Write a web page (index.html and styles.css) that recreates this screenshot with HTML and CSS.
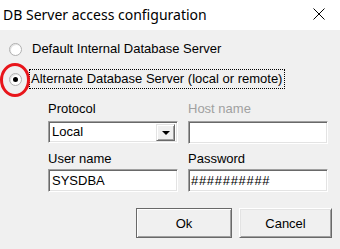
FILE: index.html
```html
<!DOCTYPE html>
<html>
<head>
<meta charset="utf-8">
<link rel="stylesheet" href="styles.css">
</head>
<body>
<div class="window">
  <div class="titlebar">
    <span class="title">DB Server access configuration</span>
    <svg class="close" width="12" height="12" viewBox="0 0 12 12"><path d="M0.5 0.5 L11.5 11.5 M11.5 0.5 L0.5 11.5" stroke="#000" stroke-width="1" fill="none"/></svg>
  </div>
  <div class="content">
    <div class="radio-row row1">
      <span class="radio"></span>
      <span class="radio-label">Default Internal Database Server</span>
    </div>
    <div class="radio-row row2">
      <span class="radio checked"><span class="dot"></span><span class="ring"></span></span>
      <span class="radio-label focus">Alternate Database Server (local or remote)</span>
    </div>
    <div class="fields">
      <div class="field-row first">
        <div class="cell left">
          <div class="label">Protocol</div>
          <div class="select sunken">
            <span class="value">Local</span>
            <span class="drop"><span class="tri"></span></span>
          </div>
        </div>
        <div class="cell right">
          <div class="label disabled">Host name</div>
          <div class="input sunken"></div>
        </div>
      </div>
      <div class="field-row second">
        <div class="cell left">
          <div class="label">User name</div>
          <div class="input sunken"><span class="value">SYSDBA</span></div>
        </div>
        <div class="cell right">
          <div class="label">Password</div>
          <div class="input sunken"><span class="value pw">##########</span></div>
        </div>
      </div>
    </div>
    <div class="buttons">
      <div class="btn default"><span>Ok</span></div>
      <div class="btn"><span>Cancel</span></div>
    </div>
  </div>
</div>
</body>
</html>
```
FILE: styles.css
```css
html, body {
  margin: 0;
  padding: 0;
  width: 340px;
  height: 249px;
  overflow: hidden;
}
.window {
  width: 340px;
  height: 249px;
  display: flex;
  flex-direction: column;
  font-family: "Liberation Sans", Arial, sans-serif;
  font-size: 13px;
  color: #000;
}
.titlebar {
  height: 30px;
  background: #fff;
  display: flex;
  align-items: center;
  padding-left: 3px;
  position: relative;
}
.title {
  font-family: "Noto Sans", "Open Sans", sans-serif;
  font-size: 14px;
  color: #000;
  margin-top: -1px;
}
.close {
  position: absolute;
  left: 313px;
  top: 8px;
}
.content {
  flex: 1;
  background: #f0f0f0;
  padding-top: 9px;
  display: flex;
  flex-direction: column;
}
.radio-row {
  height: 20px;
  display: flex;
  align-items: center;
  padding-left: 9px;
}
.row2 {
  margin-top: 10px;
}
.radio {
  width: 13px;
  height: 13px;
  box-sizing: border-box;
  border-radius: 50%;
  background: #fff;
  border: 1px solid #b0b0b0;
  box-shadow: inset 1px 1px 0 #e3e3e3;
  position: relative;
  flex: none;
}
.radio .dot {
  position: absolute;
  left: 3px;
  top: 3px;
  width: 5px;
  height: 5px;
  border-radius: 50%;
  background: #000;
}
.radio .ring {
  position: absolute;
  left: -10px;
  top: -11px;
  width: 24px;
  height: 28px;
  border: 3px solid #e8151b;
  border-radius: 50%;
}
.radio-label {
  margin-left: 9px;
  line-height: 16px;
  padding: 0 1px;
}
.radio-label.focus {
  margin-left: 7px;
  border: 1px dotted #000;
  padding: 1px 2px 1px 1px;
}
.fields {
  padding-left: 48px;
  margin-top: 12px;
  display: flex;
  flex-direction: column;
}
.field-row {
  display: flex;
  gap: 10px;
}
.second {
  margin-top: 7px;
}
.cell.left {
  width: 130px;
}
.cell.right {
  width: 140px;
}
.label {
  line-height: 16px;
  height: 16px;
}
.first .label {
  margin-bottom: 4px;
}
.second .label {
  margin-bottom: 2px;
}
.label.disabled {
  color: #a0a0a0;
}
.sunken {
  height: 23px;
  box-sizing: border-box;
  background: #fff;
  border: 1px solid;
  border-color: #a0a0a0 #fff #fff #a0a0a0;
  box-shadow: inset 1px 1px 0 #696969, inset -1px -1px 0 #e3e3e3;
  display: flex;
  align-items: center;
  padding-left: 3px;
}
.select {
  height: 22px;
  margin-top: 1px;
  padding-right: 2px;
}
.value {
  flex: 1;
  line-height: 16px;
}
.value.pw {
  letter-spacing: 0.7px;
  margin-left: -1px;
}
.drop {
  width: 19px;
  height: 17px;
  box-sizing: border-box;
  background: #f0f0f0;
  border: 1px solid;
  border-color: #e3e3e3 #696969 #696969 #e3e3e3;
  box-shadow: inset 1px 1px 0 #fff, inset -1px -1px 0 #a0a0a0;
  display: flex;
  align-items: center;
  justify-content: center;
}
.tri {
  width: 0;
  height: 0;
  border-left: 4px solid transparent;
  border-right: 4px solid transparent;
  border-top: 4px solid #000;
  margin-top: 1px;
}
.buttons {
  display: flex;
  justify-content: flex-end;
  gap: 7px;
  padding-right: 8px;
  margin-top: 16px;
}
.btn {
  height: 30px;
  width: 93px;
  box-sizing: border-box;
  background: #f0f0f0;
  border: 1px solid;
  border-color: #fff #696969 #696969 #fff;
  box-shadow: inset 1px 1px 0 #e3e3e3, inset -1px -1px 0 #a0a0a0;
  display: flex;
  align-items: center;
  justify-content: center;
}
.btn.default {
  width: 96px;
  border-color: #696969;
  box-shadow: inset 1px 1px 0 #fff, inset -1px -1px 0 #a0a0a0;
}
```
